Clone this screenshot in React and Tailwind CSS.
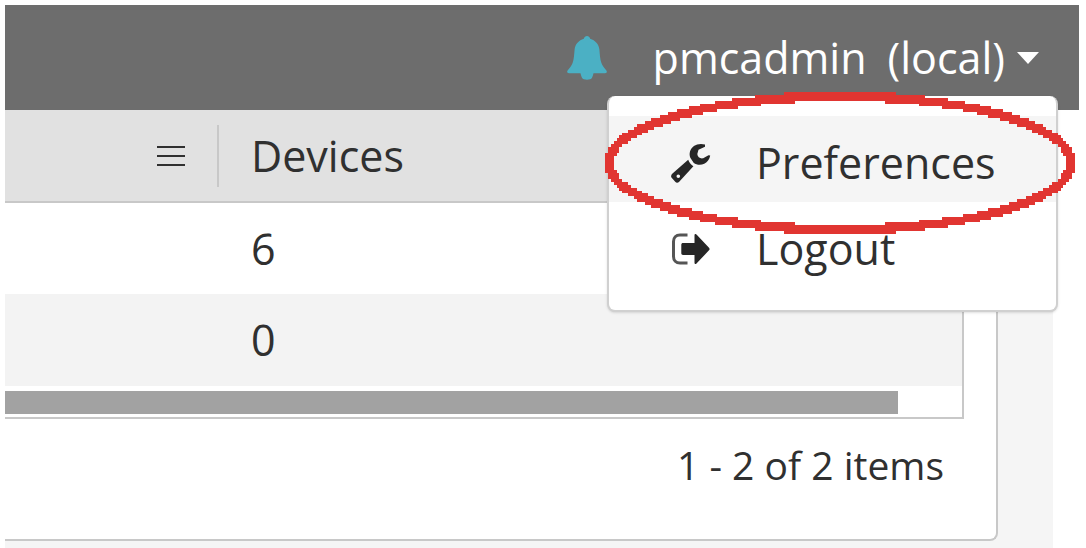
import React, { useState } from 'react'

const rows = [
  { id: 1, devices: 6 },
  { id: 2, devices: 0 },
]

const BellIcon = () => (
  <svg viewBox="0 0 40 44" className="w-10 h-11" fill="#4bb0c4" aria-hidden="true">
    <path d="M20 0c1.500 0 2.600 1 3.200 2.800 5 1.600 8.600 5.200 9.200 10.700.5 5 .6 9.500 2 13.500 1 3 3.200 5 5 7.500 1 1.500.3 2.700-1.400 2.700H26.500c-.5 2-1.100 3.500-1.500 4.600-.8 1.400-2.700 1.900-5 1.900s-4.200-.5-5-1.900c-.4-1.100-1-2.600-1.500-4.600H2C.3 37.200-.4 36 .6 34.500c1.800-2.500 4-4.500 5-7.500 1.400-4 1.500-8.500 2-13.500.6-5.500 4.200-9.100 9.200-10.700C17.400 1 18.500 0 20 0z" />
  </svg>
)

const WrenchIcon = () => (
  <svg viewBox="0 0 40 40" className="w-10 h-10" fill="#262626" aria-hidden="true">
    <path d="M34 1.600C27-.4 20.500 3 19 8.500c-.6 2.200-.5 4.300.3 6.300l3.300 4.900c4.300 3.500 10.900 2.600 14.300-1.900 1.300-1.700 2-3.500 2.300-5.300l-1.700-.2-5.300 3c-3 .7-5.700-1.300-5.900-4.300L27.500 6.800l6.500-3z" />
    <path
      fillRule="evenodd"
      d="M17.200 16.800L1.500 30.600c-1.600 1.400-1.900 3.100-.6 4.500l3.300 3.700c1.200 1.200 2.700 1.100 4 0l14.200-15.600c-2.300-1.300-4.200-3.500-5.200-6.400zM7.300 31.400a1.800 1.800 0 1 1 0 3.600 1.800 1.800 0 0 1 0-3.600z"
    />
  </svg>
)

const LogoutIcon = () => (
  <svg viewBox="0 0 40 32" className="w-10 h-8" aria-hidden="true">
    <path d="M16.500 2H9C5 2 2.500 4.500 2.500 8.500v15c0 4 2.500 6.500 6.500 6.500h7.500" fill="none" stroke="#555555" strokeWidth="3" />
    <path d="M23.500 2.200c0-1.400 1.200-1.700 2-.8L38 14.700c.8.800.8 1.800 0 2.600L25.500 30.600c-.8.900-2 .6-2-.8V22H12c-1 0-1.700-.7-1.700-1.700v-8.600c0-1 .7-1.700 1.700-1.700h11.500z" fill="#262626" />
  </svg>
)

const ColumnMenuIcon = () => (
  <svg viewBox="0 0 28 20" className="w-7 h-5" fill="#303030" aria-hidden="true">
    <path d="M0 0h28v2H0zM0 9h28v2H0zM0 18h28v2H0z" />
  </svg>
)

// Pen-drawn ring, built on a coarse grid so that its edge is stepped
const COLS = 163
const LINES = 49
const PEN = 3

const inRing = (col, line) => {
  const x = col + 0.5 - COLS / 2
  const y = line + 0.5 - LINES / 2
  const a2 = ((COLS - PEN) / 2) ** 2
  const b2 = ((LINES - PEN) / 2) ** 2
  const slope = 2 * Math.hypot(x / a2, y / b2)
  return Math.abs((x * x) / a2 + (y * y) / b2 - 1) <= (slope * (PEN + 0.2)) / 2
}

const ringPath = () => {
  let d = ''
  for (let line = 0; line < LINES; line++) {
    let start = -1
    for (let col = 0; col <= COLS; col++) {
      const on = col < COLS && inRing(col, line)
      if (on && start < 0) start = col
      if (!on && start >= 0) {
        d += `M${start} ${line}H${col}v1H${start}z`
        start = -1
      }
    }
  }
  return d
}

const Highlight = () => (
  <svg
    viewBox="0 0 163 49"
    preserveAspectRatio="none"
    className="absolute -left-1 -top-1 w-[470px] h-[142px] pointer-events-none"
    fill="#e13531"
    shapeRendering="crispEdges"
    aria-hidden="true"
  >
    <path d={ringPath()} />
  </svg>
)

const AccountMenu = () => (
  <div className="absolute z-10 right-[21px] top-[91px] w-[451px] pt-5 pb-[22px] bg-white border-2 border-t-0 border-[#d0d0d0] rounded-lg shadow-sm">
    <button className="flex items-center w-full h-[86px] pt-2 pl-[62px] gap-[45px] bg-[#f5f5f5] text-[#303030]">
      <WrenchIcon />
      Preferences
    </button>
    <button className="flex items-center w-full h-[86px] pt-2 pl-[62px] gap-[45px] text-[#303030]">
      <LogoutIcon />
      Logout
    </button>
    <Highlight />
  </div>
)

const App = () => {
  const [open, setOpen] = useState(true)

  return (
    <div className="min-h-screen flex flex-col pl-[5px] pt-[5px] bg-white text-[43px] leading-[60px] text-[#303030] font-['Open_Sans',sans-serif]">
      {/* Top bar */}
      <header className="relative flex items-center justify-end h-[105px] mr-[7px] pr-10 bg-[#6d6d6d] text-white">
        <button aria-label="Notifications" className="mr-[46px]">
          <BellIcon />
        </button>
        <button className="flex items-center gap-[21px]" onClick={() => setOpen(!open)} aria-expanded={open}>
          <span>pmcadmin</span>
          <span className="flex items-center gap-3">
            (local)
            <svg viewBox="0 0 22 12" className="w-[22px] h-3" fill="#ffffff" aria-hidden="true">
              <path d="M0 0h22L11 12z" />
            </svg>
          </span>
        </button>
        {open && <AccountMenu />}
      </header>

      <main className="grow mr-[33px] pr-[55px] bg-[#f5f5f5]">
        <section className="bg-white border-r-2 border-b-2 border-[#c8c8c8] rounded-br-lg pr-8">
          {/* Grid */}
          <div className="border-r-2 border-b-2 border-[#c8c8c8] pb-[3px]">
            <table className="w-full table-fixed border-collapse">
              <thead>
                <tr className="h-[92px] bg-[#e1e1e1] border-b-2 border-[#c8c8c8]">
                  <th className="w-[214px] p-0">
                    <div className="flex items-center justify-end h-[62px] pr-8 border-r-2 border-[#c8c8c8]">
                      <button aria-label="Column menu">
                        <ColumnMenuIcon />
                      </button>
                    </div>
                  </th>
                  <th className="p-0 pl-8 text-left font-normal">Devices</th>
                </tr>
              </thead>
              <tbody>
                {rows.map((row) => (
                  <tr key={row.id} className="h-[92px] even:bg-[#f3f3f3]">
                    <td className="p-0"></td>
                    <td className="p-0 pl-8">{row.devices}</td>
                  </tr>
                ))}
              </tbody>
            </table>
            {/* Horizontal scrollbar */}
            <div className="pt-[5px] pr-16">
              <div className="h-[23px] bg-[#a2a2a2]"></div>
            </div>
          </div>
          <p className="pt-4 pb-11 pr-5 text-right text-[39px]">1 - 2 of 2 items</p>
        </section>
      </main>
    </div>
  )
}

export default App
